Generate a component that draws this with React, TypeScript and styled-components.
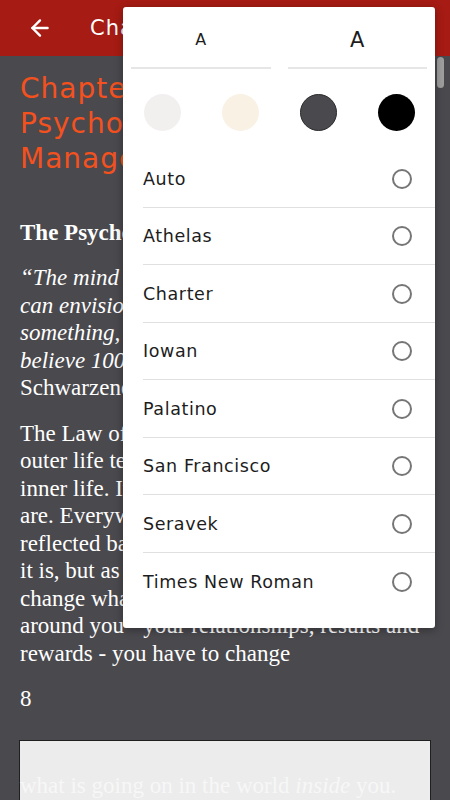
import React from "react";
import styled, { createGlobalStyle } from "styled-components";
import { ArrowLeft } from "lucide-react";

const Global = createGlobalStyle`
  html, body { margin: 0; padding: 0; }
  body { width: 450px; height: 800px; overflow: hidden; background: #4a494e; }
  * { box-sizing: border-box; }
`;

const Screen = styled.div`
  position: relative;
  width: 450px;
  height: 800px;
  overflow: hidden;
  background: #4a494e;
  display: flex;
  flex-direction: column;
`;

const Header = styled.header`
  height: 56px;
  flex: 0 0 56px;
  background: #a61b13;
  display: flex;
  align-items: center;
  padding-left: 27px;
  gap: 37px;
  color: #fff;
`;

const HeaderTitle = styled.span`
  font-family: "DejaVu Sans", sans-serif;
  font-size: 21px;
  letter-spacing: 1px;
`;

const Content = styled.main`
  padding: 15px 20px 0 20px;
  color: #fff;
  font-family: "Liberation Serif", serif;
  font-size: 23px;
  line-height: 27.5px;
`;

const ChapterTitle = styled.h1`
  margin: 0 0 43px;
  font-family: "DejaVu Sans", sans-serif;
  font-weight: 400;
  font-size: 28px;
  letter-spacing: 1px;
  line-height: 35px;
  color: #f4511e;
`;

const SubHead = styled.h2`
  margin: 0 0 18px;
  font-size: 23px;
  font-weight: 700;
  line-height: 27px;
`;

const Para = styled.p`
  margin: 0 0 18px;
  white-space: nowrap;
`;

const PageNum = styled.p`
  margin: 0 0 27px;
`;

const Figure = styled.div`
  border: 1px solid #1f1f1f;
  background: #ececec;
  height: 80px;
  margin-left: -1px;
  margin-right: -1px;
  padding-top: 31px;
  color: #f7f7f7;
  white-space: nowrap;
`;

const ScrollThumb = styled.div`
  position: absolute;
  right: 6px;
  top: 57px;
  width: 7px;
  height: 31px;
  border-radius: 4px;
  background: #9e9e9e;
`;

const Popup = styled.div`
  position: absolute;
  top: 7px;
  left: 123px;
  width: 312px;
  height: 621px;
  background: #fff;
  border-radius: 3px;
  box-shadow: 0 2px 8px rgba(0, 0, 0, 0.35);
  display: flex;
  flex-direction: column;
  font-family: "DejaVu Sans", sans-serif;
  color: #1d1d1d;
`;

const SizeRow = styled.div`
  display: grid;
  grid-template-columns: 1fr 1fr;
  gap: 17px;
  padding: 0 8px;
`;

const SizeButton = styled.div<{ $size: number }>`
  height: 62px;
  display: flex;
  align-items: center;
  justify-content: center;
  padding-top: 5px;
  border-bottom: 2px solid #e6e6e6;
  font-size: ${(p) => p.$size}px;
`;

const SwatchRow = styled.div`
  display: grid;
  grid-template-columns: repeat(4, 1fr);
  padding: 25px 0 19px;
`;

const Swatch = styled.div<{ $bg: string; $border?: boolean }>`
  justify-self: center;
  width: 37px;
  height: 37px;
  border-radius: 50%;
  background: ${(p) => p.$bg};
  border: ${(p) => (p.$border ? "1px solid #2a2a2a" : "none")};
`;

const FontList = styled.ul`
  list-style: none;
  margin: 0;
  padding: 0 0 0 20px;
`;

const FontRow = styled.li<{ $last?: boolean }>`
  height: 57.5px;
  display: flex;
  align-items: center;
  justify-content: space-between;
  padding-right: 23px;
  padding-top: 1px;
  border-bottom: ${(p) => (p.$last ? "none" : "1.5px solid #e0e0e0")};
  font-size: 17.5px;
  letter-spacing: 0.6px;
`;

const Radio = styled.span`
  width: 20px;
  height: 20px;
  border-radius: 50%;
  border: 2px solid #767676;
`;

const fonts = [
  "Auto",
  "Athelas",
  "Charter",
  "Iowan",
  "Palatino",
  "San Francisco",
  "Seravek",
  "Times New Roman",
];

export default function App() {
  return (
    <Screen>
      <Global />
      <Header>
        <ArrowLeft size={26} strokeWidth={2.2} />
        <HeaderTitle>Chapter 1</HeaderTitle>
      </Header>
      <Content>
        <ChapterTitle>
          Chapter 1: The
          <br />
          Psychology of Time
          <br />
          Management
        </ChapterTitle>
        <SubHead>The Psychology of Success</SubHead>
        <Para>
          <i>“The mind is the limit. As long as the mind</i>
          <br />
          <i>can envision the fact that you can do</i>
          <br />
          <i>something, you can do it, as long as you</i>
          <br />
          <i>believe 100 percent.”</i> — Arnold
          <br />
          Schwarzenegger
        </Para>
        <Para>
          The Law of Correspondence says that your
          <br />
          outer life tends to be a mirror of your
          <br />
          inner life. It reflects back to you who you
          <br />
          are. Everywhere you look, you see yourself
          <br />
          reflected back. You see the world not as
          <br />
          it is, but as you are. If you want to
          <br />
          change what is going on in the world
          <br />
          around you - your relationships, results and
          <br />
          rewards - you have to change
        </Para>
        <PageNum>8</PageNum>
        <Figure>
          what is going on in the world <i>inside</i> you.
        </Figure>
      </Content>
      <ScrollThumb />
      <Popup>
        <SizeRow>
          <SizeButton $size={16}>A</SizeButton>
          <SizeButton $size={21}>A</SizeButton>
        </SizeRow>
        <SwatchRow>
          <Swatch $bg="#f2efef" />
          <Swatch $bg="#f9f1e4" />
          <Swatch $bg="#4a494e" $border />
          <Swatch $bg="#000000" />
        </SwatchRow>
        <FontList>
          {fonts.map((f, i) => (
            <FontRow key={f} $last={i === fonts.length - 1}>
              {f}
              <Radio />
            </FontRow>
          ))}
        </FontList>
      </Popup>
    </Screen>
  );
}
